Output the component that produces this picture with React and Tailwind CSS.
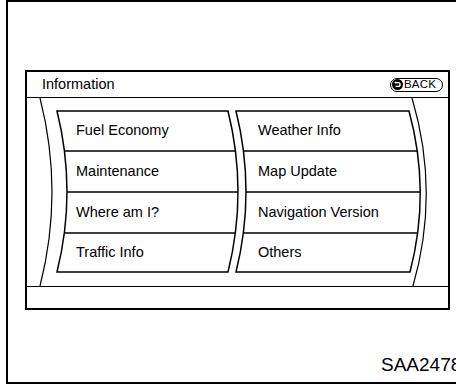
const font = { fontFamily: '"Liberation Sans", Arial, sans-serif' };

// x on a bowed edge (quadratic, symmetric) at a given y
const edgeX = (x0, d, y0, y1, y) => {
  const t = (y - y0) / (y1 - y0);
  return x0 + 4 * t * (1 - t) * d;
};

const TOP = 13;
const BOTTOM = 174;
const rowLines = [53, 94, 135];

const leftItems = [
  { label: "Fuel Economy", h: "h-[40px]" },
  { label: "Maintenance", h: "h-[41px]" },
  { label: "Where am I?", h: "h-[41px]" },
  { label: "Traffic Info", h: "h-[39px]" },
];
const rightItems = [
  { label: "Weather Info", h: "h-[40px]" },
  { label: "Map Update", h: "h-[41px]" },
  { label: "Navigation Version", h: "h-[41px]" },
  { label: "Others", h: "h-[39px]" },
];

const BackIcon = () => (
  <svg width="11" height="11" viewBox="0 0 11 11">
    <circle cx="5.5" cy="5.5" r="5.5" fill="black" />
    <path
      d="M3.4 3.6 H6.2 A1.9 1.9 0 0 1 6.2 7.4 H3.6"
      fill="none"
      stroke="white"
      strokeWidth="1.4"
    />
    <path d="M2.2 3.6 L4.2 2.2 L4.2 5 Z" fill="white" />
  </svg>
);

const Curves = () => (
  <svg
    className="absolute inset-0"
    width="421"
    height="188"
    viewBox="0 0 421 188"
  >
    <g fill="none" stroke="black">
      {/* outer bowed guides */}
      <path d="M13 0 Q37 94 13 188" strokeWidth="1.2" />
      <path d="M385 0 Q413 94 386 188" strokeWidth="1.2" />
      {/* left menu block */}
      <path
        d={`M30 ${TOP} L201 ${TOP} Q221 93.5 201 ${BOTTOM} L30 ${BOTTOM} Q50 93.5 30 ${TOP} Z`}
        strokeWidth="1.5"
      />
      {/* right menu block */}
      <path
        d={`M209 ${TOP} L382 ${TOP} Q404 93.5 383 ${BOTTOM} L209 ${BOTTOM} Q229 93.5 209 ${TOP} Z`}
        strokeWidth="1.5"
      />
      {rowLines.map((y) => (
        <g key={y}>
          <line
            x1={edgeX(30, 10, TOP, BOTTOM, y)}
            y1={y}
            x2={edgeX(201, 10, TOP, BOTTOM, y)}
            y2={y}
            strokeWidth="1.5"
          />
          <line
            x1={edgeX(209, 10, TOP, BOTTOM, y)}
            y1={y}
            x2={edgeX(382, 11, TOP, BOTTOM, y)}
            y2={y}
            strokeWidth="1.5"
          />
        </g>
      ))}
    </g>
  </svg>
);

export default function App() {
  return (
    <div className="w-[456px] h-[385px] overflow-hidden bg-white text-black" style={font}>
      <div className="ml-[6px] w-[500px] h-[384px] border-2 border-black">
        {/* screen panel */}
        <div className="ml-[17px] mt-[68px] w-[425px] h-[240px] border-2 border-black flex flex-col">
          {/* header */}
          <div className="h-[26px] border-b border-black flex items-center justify-between pl-[15px] pr-[5px]">
            <span className="text-[14.5px] leading-none">Information</span>
            <div className="flex items-center h-[14px] w-[53px] pl-[1px] border-[1.5px] border-black rounded-full gap-[1px]">
              <BackIcon />
              <span className="text-[11.5px] leading-none tracking-[0.2px]">BACK</span>
            </div>
          </div>

          {/* menu */}
          <div className="relative h-[188px]">
            <Curves />
            <div className="relative flex pt-[13px] pl-[49px]">
              <div className="w-[182px] flex flex-col">
                {leftItems.map((item) => (
                  <div key={item.label} className={`${item.h} flex items-center text-[14.5px]`}>
                    {item.label}
                  </div>
                ))}
              </div>
              <div className="flex flex-col">
                {rightItems.map((item) => (
                  <div key={item.label} className={`${item.h} flex items-center text-[14.5px]`}>
                    {item.label}
                  </div>
                ))}
              </div>
            </div>
          </div>

          {/* footer bar */}
          <div className="flex-1 border-t border-black"></div>
        </div>

        <div className="ml-[373px] mt-[44px] text-[19px] leading-[22px] whitespace-nowrap">
          SAA2478
        </div>
      </div>
    </div>
  );
}
